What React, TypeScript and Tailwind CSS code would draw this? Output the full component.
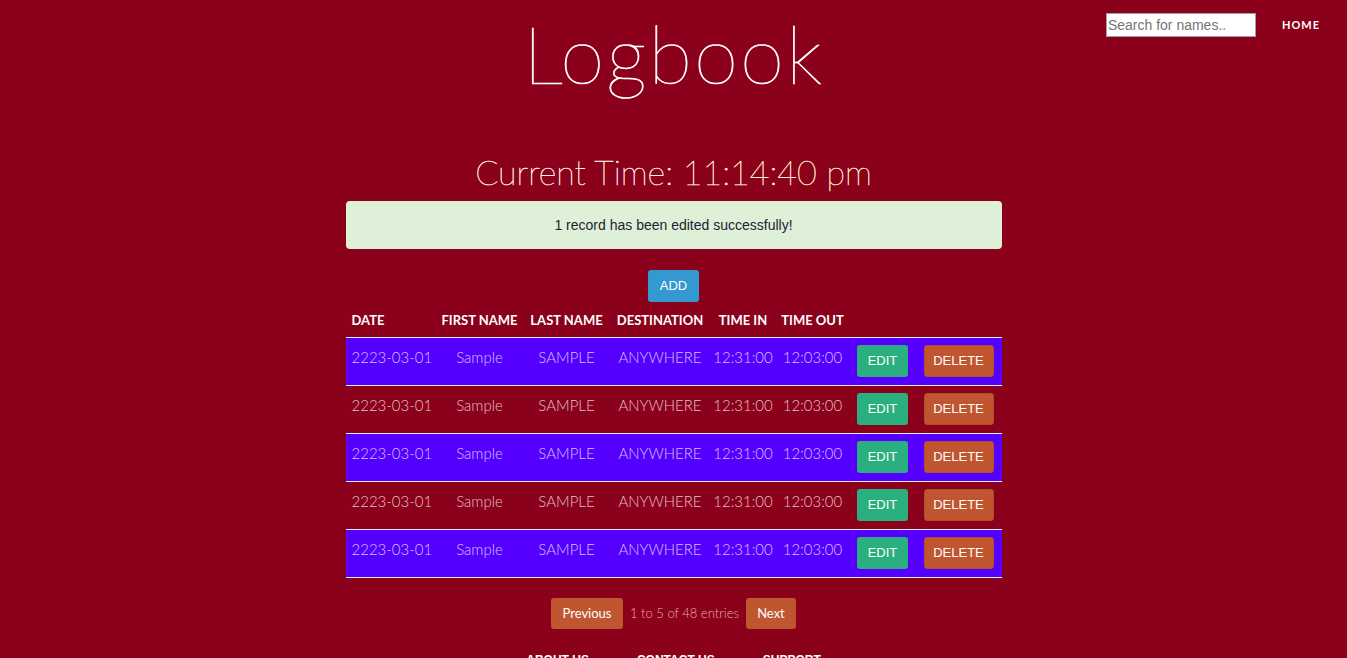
import React from 'react';

const rows = [0, 1, 2, 3, 4].map((i) => ({
  date: '2223-03-01',
  first: 'Sample',
  last: 'SAMPLE',
  dest: 'ANYWHERE',
  timeIn: '12:31:00',
  timeOut: '12:03:00',
  purple: i % 2 === 0,
}));

const cols = 'grid grid-cols-[90px_88px_86px_101px_65px_74px_66px_86px]';

export default function App() {
  return (
    <div className="min-h-[658px] bg-[#8b001a] font-['Lato',sans-serif] text-white">
      <div className="grid grid-cols-[1fr_auto_1fr]">
        <div />
        <h1 className="pt-[5px] text-[80px] font-extralight leading-[96px] tracking-[2px] text-white [-webkit-text-stroke:0.7px_white]">
          Logbook
        </h1>
        <div className="flex items-start justify-end pt-[13px] pr-[27px]">
          <input
            type="text"
            placeholder="Search for names.."
            className="h-[24px] w-[150px] border border-[#a0a0a0] bg-white px-[1px] font-['Liberation_Sans',sans-serif] text-[14px] text-black placeholder:text-[#757575] outline-none"
          />
          <a className="ml-[26px] mt-[4px] text-[11px] font-bold tracking-[1px] text-white">HOME</a>
        </div>
      </div>

      <div className="mx-auto w-[656px]">
        <h2 className="mt-[50px] text-center text-[34px] font-extralight leading-[42px] text-[#fff2ee] [-webkit-text-stroke:0.5px_#fff0e0]">
          Current Time: <span className="text-[#fff2d4] [-webkit-text-stroke:0.5px_#fff0d0]">11:14:40 pm</span>
        </h2>

        <div className="mt-[8px] flex h-[48px] items-center justify-center rounded-[4px] bg-[#dff0d8] font-['Liberation_Sans',sans-serif] text-[14px] text-[#1c2233]">
          1 record has been edited successfully!
        </div>

        <div className="mt-[21px] flex justify-center">
          <button className="h-[32px] w-[51px] rounded-[3px] bg-[#3399d0] font-['Liberation_Sans',sans-serif] text-[13px] text-white">
            ADD
          </button>
        </div>

        <div className={`${cols} mt-[2px] h-[34px] items-center border-b border-[#f2f2f2] text-[13px] font-bold text-white`}>
          <div className="pl-[6px]">DATE</div>
          <div className="text-center">FIRST NAME</div>
          <div className="text-center">LAST NAME</div>
          <div className="text-center">DESTINATION</div>
          <div className="text-center">TIME IN</div>
          <div className="text-center">TIME OUT</div>
          <div />
          <div />
        </div>

        {rows.map((r, i) => (
          <div
            key={i}
            className={`${cols} h-[48px] border-b border-[#f2f2f2] text-[15px] font-light text-white/75 ${
              r.purple ? 'bg-[#5500ff]' : 'bg-[#8b001a]'
            }`}
          >
            <div className="pl-[6px] pt-[8px]">{r.date}</div>
            <div className="pt-[8px] text-center">{r.first}</div>
            <div className="pt-[8px] text-center">{r.last}</div>
            <div className="pt-[8px] text-center">{r.dest}</div>
            <div className="pt-[8px] text-center">{r.timeIn}</div>
            <div className="pt-[8px] text-center">{r.timeOut}</div>
            <div className="flex justify-center pt-[7px]">
              <button className="h-[32px] w-[51px] rounded-[3px] bg-[#2ab07f] font-['Liberation_Sans',sans-serif] text-[13px] text-white">
                EDIT
              </button>
            </div>
            <div className="flex justify-center pt-[7px]">
              <button className="h-[32px] w-[70px] rounded-[3px] border border-[#b04e2a] bg-[#bf5630] font-['Liberation_Sans',sans-serif] text-[13px] text-white">
                DELETE
              </button>
            </div>
          </div>
        ))}

        <div className="mt-[20px] flex items-center justify-center gap-[7px]">
          <button className="h-[31px] w-[72px] rounded-[3px] bg-[#bf5630] text-[13px] font-normal text-white">
            Previous
          </button>
          <span className="text-[13px] font-light text-[#f0a8a8]">1 to 5 of 48 entries</span>
          <button className="h-[31px] w-[50px] rounded-[3px] bg-[#bf5630] text-[13px] font-normal text-white">
            Next
          </button>
        </div>

        <div className="mt-[22px] flex justify-center gap-[48px] font-['Liberation_Sans',sans-serif] text-[12px] font-bold text-white">
          <a>ABOUT US</a>
          <a>CONTACT US</a>
          <a>SUPPORT</a>
        </div>
      </div>
    </div>
  );
}
